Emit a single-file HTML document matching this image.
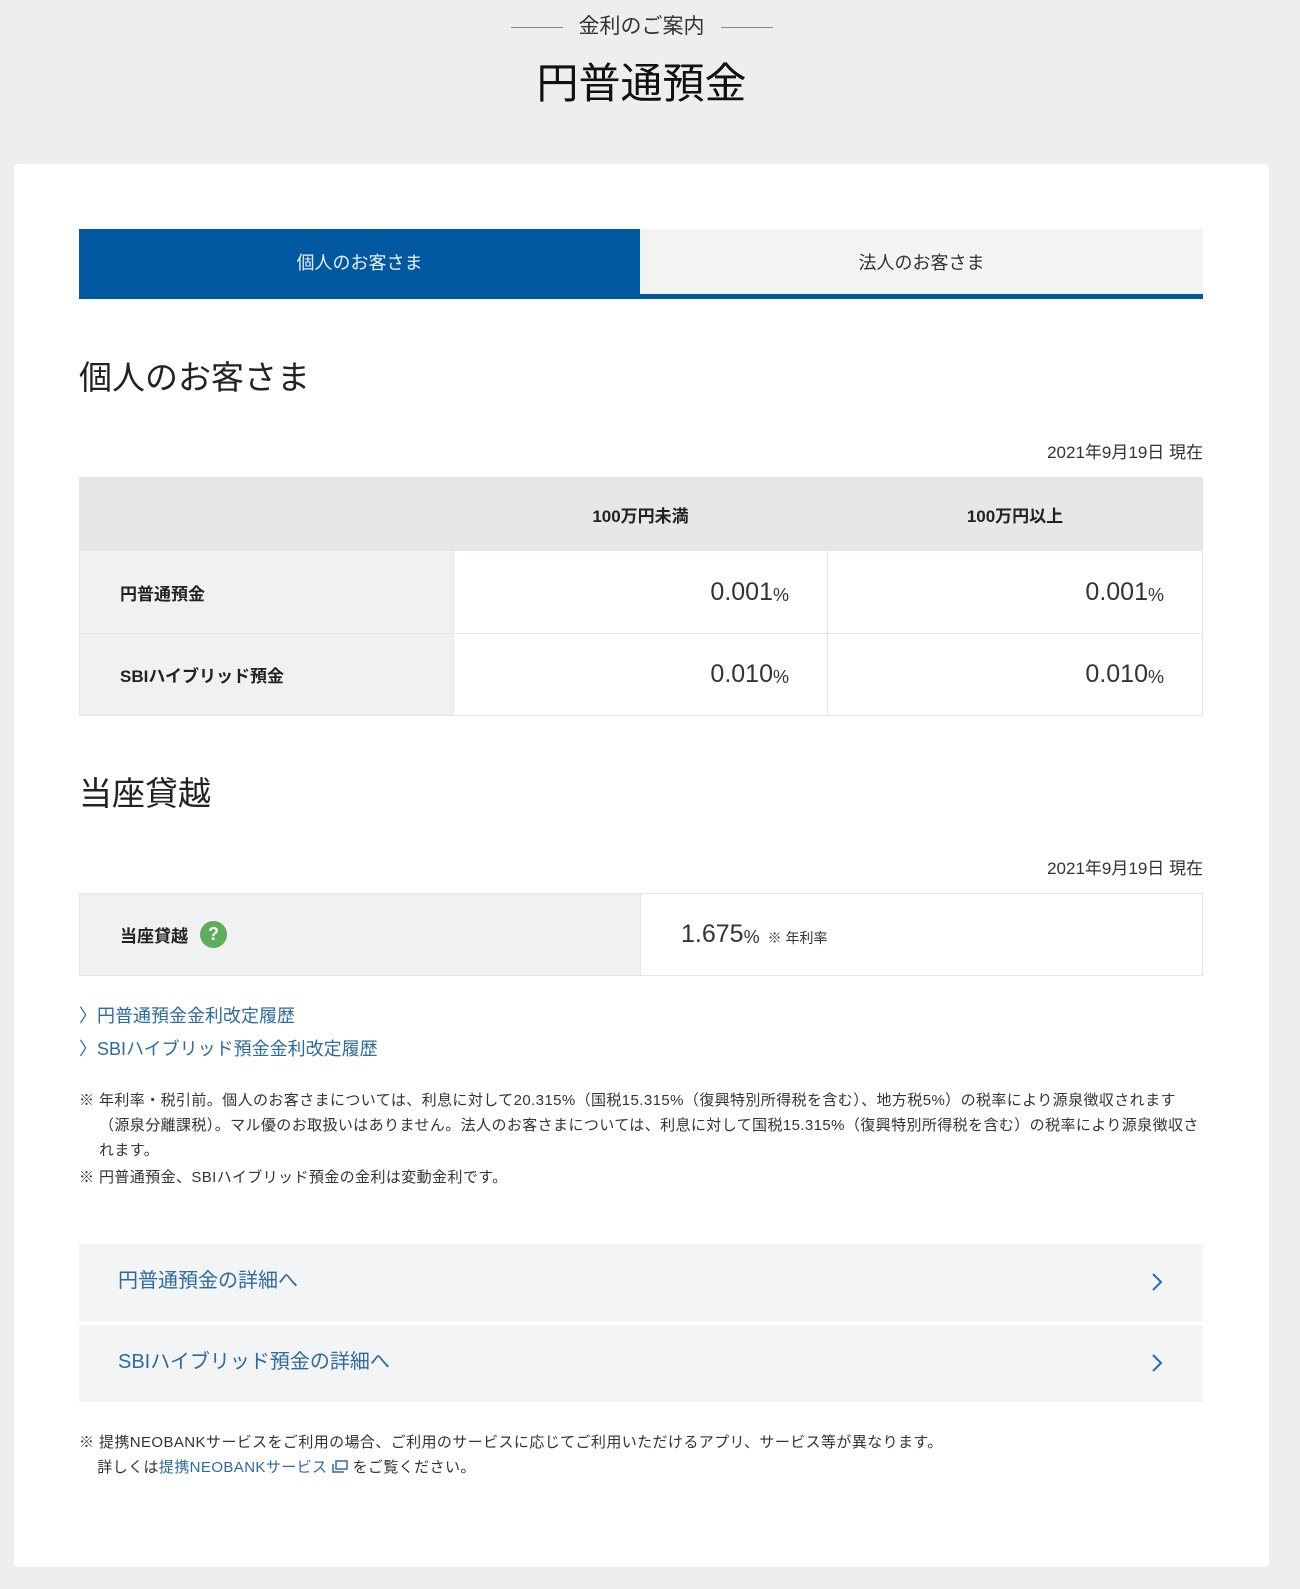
<!DOCTYPE html>
<html><head><meta charset="utf-8"><style>
*{margin:0;padding:0;box-sizing:border-box}
body{width:1300px;height:1589px;background:#eeeeee;font-family:"Liberation Sans","Noto Sans CJK JP",sans-serif;color:#222;position:relative;overflow:hidden}
.a{position:absolute}
.card{left:14px;top:164px;width:1255px;height:1403px;background:#fff;border-radius:4px}
.sub{left:0;width:1283px;top:10px;text-align:center;font-size:21px;color:#333}
.sub span{display:inline-block;width:52px;height:1px;background:#888;vertical-align:middle;margin:0 16px}
.title{left:0;width:1283px;top:50px;text-align:center;font-size:42px;color:#111}
.tab{top:229px;height:70px;font-size:18px;text-align:center;line-height:68px}
.h2{font-size:33px;color:#222;left:79px}
.date{right:97px;font-size:17px;color:#333}
.cell{position:absolute;display:flex;align-items:center;border:1px solid #e4e5e7}
.num{font-size:25px;color:#333;justify-content:flex-end;padding-right:38px}
.num small{font-size:18px;margin-top:6px}
.lbl{font-size:17px;font-weight:bold;padding-left:40px;background:#f0f1f2}
.lnk{left:79px;font-size:18px;color:#2f6a9f}
.note{left:79px;font-size:15px;line-height:25px;color:#333;width:1120px;letter-spacing:0.4px}
.btn{left:79px;width:1124px;height:77px;background:#f3f4f5;font-size:20px;color:#2f6a9f;line-height:75px;padding-left:39px}
.btn svg{position:absolute;right:40px;top:28px}
</style></head><body>
<div class="a sub"><span></span>金利のご案内<span></span></div>
<div class="a title">円普通預金</div>
<div class="a card"></div>
<div class="a tab" style="left:79px;width:561px;background:#0058a0;color:#e8f0f8">個人のお客さま</div>
<div class="a tab" style="left:640px;width:563px;background:#f3f3f3;color:#333">法人のお客さま</div>
<div class="a" style="left:79px;top:294px;width:1124px;height:5px;background:#0058a0"></div>
<div class="a h2" style="top:351px">個人のお客さま</div>
<div class="a date" style="top:438px">2021年9月19日 現在</div>
<div class="cell" style="left:79px;top:477px;width:375px;height:74px;background:#e6e7e9"></div>
<div class="cell" style="left:453px;top:477px;width:375px;height:74px;background:#e6e7e9;justify-content:center;font-weight:bold;font-size:17px">100万円未満</div>
<div class="cell" style="left:827px;top:477px;width:376px;height:74px;background:#e6e7e9;justify-content:center;font-weight:bold;font-size:17px">100万円以上</div>
<div class="cell lbl" style="left:79px;top:550px;width:375px;height:84px">円普通預金</div>
<div class="cell num" style="left:453px;top:550px;width:375px;height:84px">0.001<small>%</small></div>
<div class="cell num" style="left:827px;top:550px;width:376px;height:84px">0.001<small>%</small></div>
<div class="cell lbl" style="left:79px;top:633px;width:375px;height:83px">SBIハイブリッド預金</div>
<div class="cell num" style="left:453px;top:633px;width:375px;height:83px">0.010<small>%</small></div>
<div class="cell num" style="left:827px;top:633px;width:376px;height:83px">0.010<small>%</small></div>
<div class="a h2" style="top:767px">当座貸越</div>
<div class="a date" style="top:854px">2021年9月19日 現在</div>
<div class="cell lbl" style="left:79px;top:893px;width:562px;height:83px">当座貸越<span style="display:inline-block;width:27px;height:27px;border-radius:50%;background:#5cad5c;color:#fff;text-align:center;line-height:27px;font-size:18px;margin-left:12px">?</span></div>
<div class="cell" style="left:640px;top:893px;width:563px;height:83px;padding-left:40px;font-size:25px;color:#333">1.675<span style="font-size:18px;margin-top:6px">%</span><span style="font-size:14px;margin:6px 0 0 8px">※ 年利率</span></div>
<div class="a lnk" style="top:1002px">〉円普通預金金利改定履歴</div>
<div class="a lnk" style="top:1035px">〉SBIハイブリッド預金金利改定履歴</div>
<div class="a note" style="top:1088px;padding-left:20px;text-indent:-20px">※ 年利率・税引前。個人のお客さまについては、利息に対して20.315%（国税15.315%（復興特別所得税を含む）、地方税5%）の税率により源泉徴収されます（源泉分離課税）。マル優のお取扱いはありません。法人のお客さまについては、利息に対して国税15.315%（復興特別所得税を含む）の税率により源泉徴収されます。</div>
<div class="a note" style="top:1165px">※ 円普通預金、SBIハイブリッド預金の金利は変動金利です。</div>
<div class="a btn" style="top:1244px">円普通預金の詳細へ<svg width="12" height="20" viewBox="0 0 12 20"><path d="M2 2l8 8-8 8" fill="none" stroke="#2f6a9f" stroke-width="2"/></svg></div>
<div class="a btn" style="top:1325px">SBIハイブリッド預金の詳細へ<svg width="12" height="20" viewBox="0 0 12 20"><path d="M2 2l8 8-8 8" fill="none" stroke="#2f6a9f" stroke-width="2"/></svg></div>
<div class="a note" style="top:1430px">※ 提携NEOBANKサービスをご利用の場合、ご利用のサービスに応じてご利用いただけるアプリ、サービス等が異なります。<br>&nbsp;&nbsp;&nbsp;&nbsp;詳しくは<span style="color:#2f6a9f">提携NEOBANKサービス <svg width="16" height="13" viewBox="0 0 16 13" style="vertical-align:-1px"><rect x="4" y="1" width="11" height="8" fill="none" stroke="#2f6a9f" stroke-width="1.5"/><path d="M1 4v8h11" fill="none" stroke="#2f6a9f" stroke-width="1.5"/></svg></span> をご覧ください。</div>
</body></html>
